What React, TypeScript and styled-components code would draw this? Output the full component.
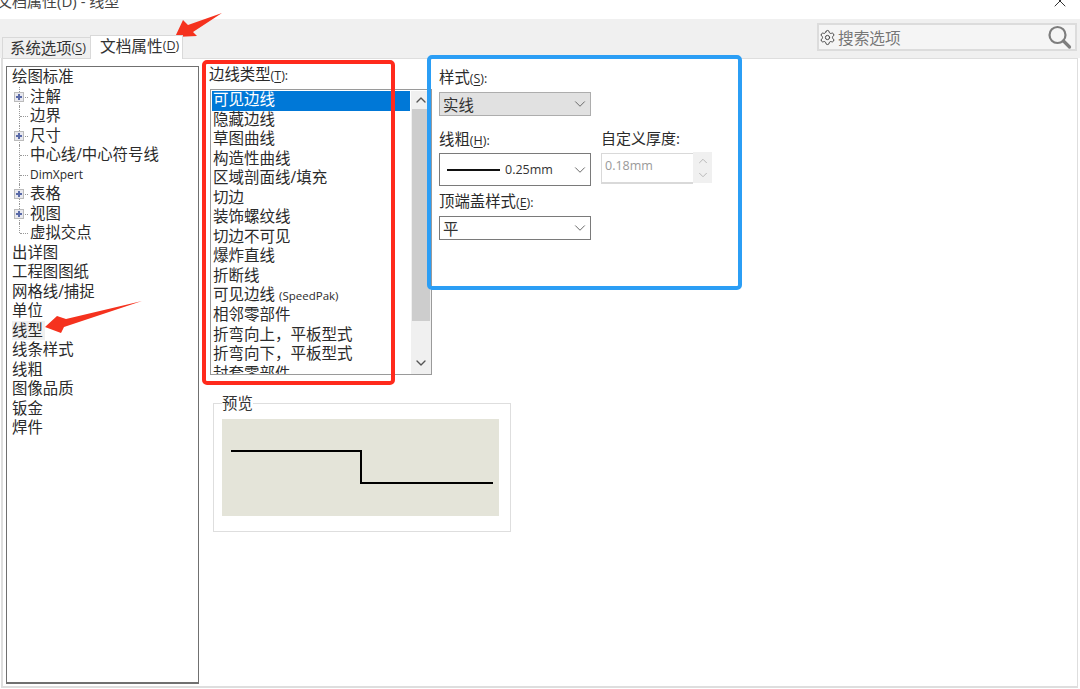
import React from "react";
import styled, { createGlobalStyle } from "styled-components";
import { Settings, ChevronDown, ChevronUp, X } from "lucide-react";

const Global = createGlobalStyle`
  html, body { margin: 0; padding: 0; background: #fff; }
  * { box-sizing: border-box; }
`;

const FONT = `"Open Sans", "Noto Sans CJK SC", sans-serif`;

const Page = styled.div`
  position: relative;
  width: 1080px;
  height: 689px;
  overflow: hidden;
  background: #fff;
  display: flex;
  flex-direction: column;
  font-family: ${FONT};
  font-size: 15.4px;
  color: #2b2b2b;
`;

const TitleBar = styled.div`
  height: 19px;
  flex: none;
  overflow: hidden;
  display: flex;
  justify-content: space-between;
  padding: 0 10px 0 0;
`;
const TitleText = styled.div`
  margin: -9px 0 0 -3px;
  line-height: 20px;
  font-size: 15px;
  color: #444;
`;
const CloseGlyph = styled.div`
  margin-top: -9px;
  color: #333;
  height: 16px;
`;

const Toolbar = styled.div`
  height: 39px;
  flex: none;
  background: #f0f0f0;
  display: flex;
  justify-content: space-between;
  align-items: flex-end;
  padding: 0 3px 0 2px;
`;
const Tabs = styled.div`
  display: flex;
  align-items: flex-end;
  margin-bottom: -1px;
`;
const Tab = styled.div<{ $active?: boolean }>`
  height: ${(p) => (p.$active ? 24 : 22)}px;
  width: ${(p) => (p.$active ? 93 : 88)}px;
  background: ${(p) => (p.$active ? "#fff" : "#f0f0f0")};
  border: 1px solid #d9d9d9;
  border-bottom: ${(p) => (p.$active ? "none" : "1px solid #d9d9d9")};
  border-right: ${(p) => (p.$active ? "1px solid #d9d9d9" : "none")};
  display: flex;
  align-items: center;
  padding: 0 0 ${(p) => (p.$active ? 4 : 2)}px ${(p) => (p.$active ? 9 : 7)}px;
  white-space: nowrap;
  position: relative;
  z-index: ${(p) => (p.$active ? 1 : 0)};
  color: #333;
  font-size: ${(p) => (p.$active ? "15.7px" : "15.4px")};
`;
const Key = styled.span`
  font-size: 12.5px;
  text-decoration: none;
  & u { text-underline-offset: 2px; }
`;
const SearchBox = styled.div`
  width: 260px;
  height: 28px;
  margin-bottom: 7px;
  background: #f5f5f5;
  border: 2px solid #dcdcdc;
  display: flex;
  align-items: center;
  padding: 0 3px 0 0;
  color: #777;
  gap: 2px;
  font-size: 15.7px;
`;
const SearchLabel = styled.span`
  flex: 1;
`;

const Panel = styled.div`
  width: 1077px;
  height: 630px;
  margin-left: 1px;
  margin-bottom: 1px;
  flex: none;
  background: #fff;
  border: 1px solid #dedede;
  border-left-width: 2px;
  border-bottom-width: 2px;
  display: flex;
  padding: 7px 0 0 3px;
`;

const Tree = styled.div`
  width: 193px;
  height: 618px;
  flex: none;
  border: 1px solid #707070;
  border-bottom-width: 2px;
  padding: 0 0 0 5px;
`;
const Row = styled.div`
  height: 19.5px;
  line-height: 19.5px;
  position: relative;
  white-space: nowrap;
`;
const SelectedText = styled.span`
  background: #f0f0f0;
  display: inline-block;
  height: 19px;
  padding-right: 2px;
`;
const ChildRow = styled(Row)<{ $last?: boolean; $small?: boolean }>`
  padding-left: 18px;
  font-size: ${(p) => (p.$small ? "12px" : "inherit")};
  &::before {
    content: "";
    position: absolute;
    left: 7px;
    top: 0;
    height: ${(p) => (p.$last ? "10px" : "100%")};
    border-left: 1px dotted #999;
  }
  &::after {
    content: "";
    position: absolute;
    left: 8px;
    top: 10px;
    width: 8px;
    border-top: 1px dotted #999;
  }
`;
const Expander = styled.span`
  position: absolute;
  left: 2px;
  top: 5px;
  width: 10px;
  height: 10px;
  background: #e8e8ee;
  border: 1px solid #bbb;
  z-index: 1;
  &::before {
    content: "";
    position: absolute;
    left: 1px;
    top: 3px;
    width: 6px;
    height: 2px;
    background: #5a6aa8;
  }
  &::after {
    content: "";
    position: absolute;
    left: 3px;
    top: 1px;
    width: 2px;
    height: 6px;
    background: #5a6aa8;
  }
`;

const Middle = styled.div`
  width: 222px;
  margin-left: 11px;
  flex: none;
  display: flex;
  flex-direction: column;
`;
const FieldLabel = styled.div<{ $nudge?: number; $size?: number }>`
  line-height: 18px;
  height: 18px;
  white-space: nowrap;
  margin-left: ${(p) => p.$nudge ?? 0}px;
  font-size: ${(p) => (p.$size ? `${p.$size}px` : "inherit")};
`;
const ListBox = styled.div`
  margin-top: 5px;
  width: 222px;
  height: 286px;
  border: 1px solid #9a9a9a;
  display: flex;
  overflow: hidden;
  padding: 1px 0 0 1px;
`;
const ListItems = styled.div`
  flex: 1;
  overflow: hidden;
`;
const ListItem = styled.div<{ $selected?: boolean }>`
  height: 19.55px;
  line-height: 17.5px;
  padding-left: 1px;
  white-space: nowrap;
  background: ${(p) => (p.$selected ? "#0078d7" : "transparent")};
  color: ${(p) => (p.$selected ? "#fff" : "#2b2b2b")};
  font-size: 15.5px;
`;
const Latin = styled.span`
  font-size: 11.5px;
`;
const ScrollBar = styled.div`
  width: 20px;
  flex: none;
  background: #f0f0f0;
  display: flex;
  flex-direction: column;
  align-items: center;
  color: #555;
  margin-left: 1px;
`;
const ScrollButton = styled.div`
  height: 18px;
  flex: none;
  display: flex;
  align-items: center;
  justify-content: center;
`;
const ScrollThumb = styled.div`
  width: 18px;
  height: 212px;
  margin-bottom: 33px;
  background: #cdcdcd;
`;

const Preview = styled.fieldset`
  margin: 18px 0 0 3px;
  padding: 0 0 0 8px;
  width: 298px;
  height: 139px;
  border: 1px solid #dedede;
`;
const PreviewLegend = styled.legend`
  margin-left: 0;
  padding: 0;
  line-height: 21px;
  color: #333;
`;
const PreviewCanvas = styled.div`
  width: 277px;
  height: 97px;
  margin-top: 5px;
  background: #e4e4d9;
`;

const Right = styled.div`
  margin-left: 7px;
  width: 273px;
  flex: none;
  display: grid;
  grid-template-columns: 152px 111px;
  column-gap: 10px;
  align-content: start;
  padding-top: 3px;
`;
const SelectBox = styled.div<{ $h: number; $disabled?: boolean; $gap: number }>`
  height: ${(p) => p.$h}px;
  margin-top: ${(p) => p.$gap}px;
  background: ${(p) => (p.$disabled ? "#e1e1e1" : "#fff")};
  border: 1px solid ${(p) => (p.$disabled ? "#adadad" : "#7a7a7a")};
  display: flex;
  align-items: center;
  padding: 0 1px 0 3px;
  color: #333;
  white-space: nowrap;
`;
const SelectValue = styled.span`
  flex: 1;
  display: flex;
  align-items: center;
`;
const LinePreview = styled.span`
  width: 53px;
  height: 2px;
  margin: 0 5px 0 4px;
  background: #111;
`;
const SmallValue = styled.span`
  font-size: 12.5px;
`;
const Chevron = styled(ChevronDown)`
  color: #666;
  flex: none;
`;
const Span2 = styled.div<{ $top: number }>`
  grid-column: 1 / 2;
  margin-top: ${(p) => p.$top}px;
`;
const Cell = styled.div<{ $top: number }>`
  margin-top: ${(p) => p.$top}px;
`;
const SpinRow = styled.div`
  display: flex;
  height: 33px;
  margin-top: 5px;
`;
const SpinInput = styled.div`
  width: 92px;
  height: 31px;
  background: #fff;
  border: 1px solid #d9d9d9;
  border-right: none;
  border-bottom: 2px solid #d9d9d9;
  margin-top: 1px;
  color: #9a9a9a;
  font-size: 12.5px;
  line-height: 23px;
  padding-left: 3px;
`;
const SpinButtons = styled.div`
  width: 19px;
  height: 31px;
  background: #f0f0f0;
  color: #b5b5b5;
  display: flex;
  flex-direction: column;
  align-items: center;
  justify-content: center;
`;

const Highlight = styled.div<{ $color: string; $w: number; $x: number; $y: number; $width: number; $height: number }>`
  position: absolute;
  left: ${(p) => p.$x}px;
  top: ${(p) => p.$y}px;
  width: ${(p) => p.$width}px;
  height: ${(p) => p.$height}px;
  border: ${(p) => p.$w}px solid ${(p) => p.$color};
  border-radius: 5px;
  pointer-events: none;
`;
const Arrows = styled.svg`
  position: absolute;
  left: 0;
  top: 0;
  pointer-events: none;
`;

const items: React.ReactNode[] = [
  "可见边线", "隐藏边线", "草图曲线", "构造性曲线", "区域剖面线/填充", "切边", "装饰螺纹线",
  "切边不可见", "爆炸直线", "折断线",
  <>可见边线 <Latin>(SpeedPak)</Latin></>,
  "相邻零部件", "折弯向上，平板型式", "折弯向下，平板型式", "封套零部件",
];

export default function App() {
  return (
    <Page>
      <Global />
      <TitleBar>
        <TitleText>文档属性(D) - 线型</TitleText>
        <CloseGlyph><X size={20} strokeWidth={1.2} /></CloseGlyph>
      </TitleBar>
      <Toolbar>
        <Tabs>
          <Tab>系统选项<Key>(<u>S</u>)</Key></Tab>
          <Tab $active>文档属性<Key>(<u>D</u>)</Key></Tab>
        </Tabs>
        <SearchBox>
          <Settings size={17} strokeWidth={1.4} color="#444" />
          <SearchLabel>搜索选项</SearchLabel>
          <svg width="26" height="26" viewBox="0 0 26 26" fill="none" stroke="#7d7d7d">
            <circle cx="11.5" cy="11" r="8" strokeWidth="2.2" />
            <path d="M17.5 17 L23.5 23" strokeWidth="3.2" strokeLinecap="round" />
          </svg>
        </SearchBox>
      </Toolbar>
      <Panel>
        <Tree>
          <Row>绘图标准</Row>
          <ChildRow><Expander />注解</ChildRow>
          <ChildRow>边界</ChildRow>
          <ChildRow><Expander />尺寸</ChildRow>
          <ChildRow>中心线/中心符号线</ChildRow>
          <ChildRow $small>DimXpert</ChildRow>
          <ChildRow><Expander />表格</ChildRow>
          <ChildRow><Expander />视图</ChildRow>
          <ChildRow $last>虚拟交点</ChildRow>
          <Row>出详图</Row>
          <Row>工程图图纸</Row>
          <Row>网格线/捕捉</Row>
          <Row>单位</Row>
          <Row><SelectedText>线型</SelectedText></Row>
          <Row>线条样式</Row>
          <Row>线粗</Row>
          <Row>图像品质</Row>
          <Row>钣金</Row>
          <Row>焊件</Row>
        </Tree>
        <Middle>
          <FieldLabel $nudge={-1}>边线类型<Key>(<u>T</u>):</Key></FieldLabel>
          <ListBox>
            <ListItems>
              {items.map((it, i) => (
                <ListItem key={i} $selected={i === 0}>{it}</ListItem>
              ))}
            </ListItems>
            <ScrollBar>
              <ScrollButton><ChevronUp size={16} strokeWidth={2} /></ScrollButton>
              <ScrollThumb />
              <ScrollButton><ChevronDown size={16} strokeWidth={2} /></ScrollButton>
            </ScrollBar>
          </ListBox>
          <Preview>
            <PreviewLegend>预览</PreviewLegend>
            <PreviewCanvas>
              <svg width="277" height="97" viewBox="0 0 277 97" fill="none">
                <path d="M9 32 H139 V64 H271" stroke="#000" strokeWidth="2" />
              </svg>
            </PreviewCanvas>
          </Preview>
        </Middle>
        <Right>
          <Span2 $top={0}>
            <FieldLabel>样式<Key>(<u>S</u>):</Key></FieldLabel>
            <SelectBox $h={24} $gap={5} $disabled>
              <SelectValue>实线</SelectValue>
              <Chevron size={18} strokeWidth={1.3} />
            </SelectBox>
          </Span2>
          <div />
          <Span2 $top={15}>
            <FieldLabel>线粗<Key>(<u>H</u>):</Key></FieldLabel>
            <SelectBox $h={33} $gap={4}>
              <SelectValue>
                <LinePreview />
                <SmallValue>0.25mm</SmallValue>
              </SelectValue>
              <Chevron size={18} strokeWidth={1.3} />
            </SelectBox>
          </Span2>
          <Cell $top={13}>
            <FieldLabel $size={15}>自定义厚度:</FieldLabel>
            <SpinRow>
              <SpinInput>0.18mm</SpinInput>
              <SpinButtons>
                <ChevronUp size={14} strokeWidth={1.6} />
                <ChevronDown size={14} strokeWidth={1.6} />
              </SpinButtons>
            </SpinRow>
          </Cell>
          <Span2 $top={7}>
            <FieldLabel>顶端盖样式<Key>(<u>E</u>):</Key></FieldLabel>
            <SelectBox $h={24} $gap={5}>
              <SelectValue>平</SelectValue>
              <Chevron size={18} strokeWidth={1.3} />
            </SelectBox>
          </Span2>
        </Right>
      </Panel>
      <Highlight $color="#ff2a1c" $w={4} $x={202} $y={60} $width={193} $height={325} />
      <Highlight $color="#2b9ef5" $w={4} $x={427} $y={55} $width={315} $height={235} />
      <Arrows width="1080" height="689" viewBox="0 0 1080 689">
        <polygon points="175,37 183,20 188,25 222,13 193,32 197,36" fill="#f5321e" />
        <polygon points="45,327 57,316 66,319 142,301 64,327 61,333" fill="#f5321e" />
      </Arrows>
    </Page>
  );
}
